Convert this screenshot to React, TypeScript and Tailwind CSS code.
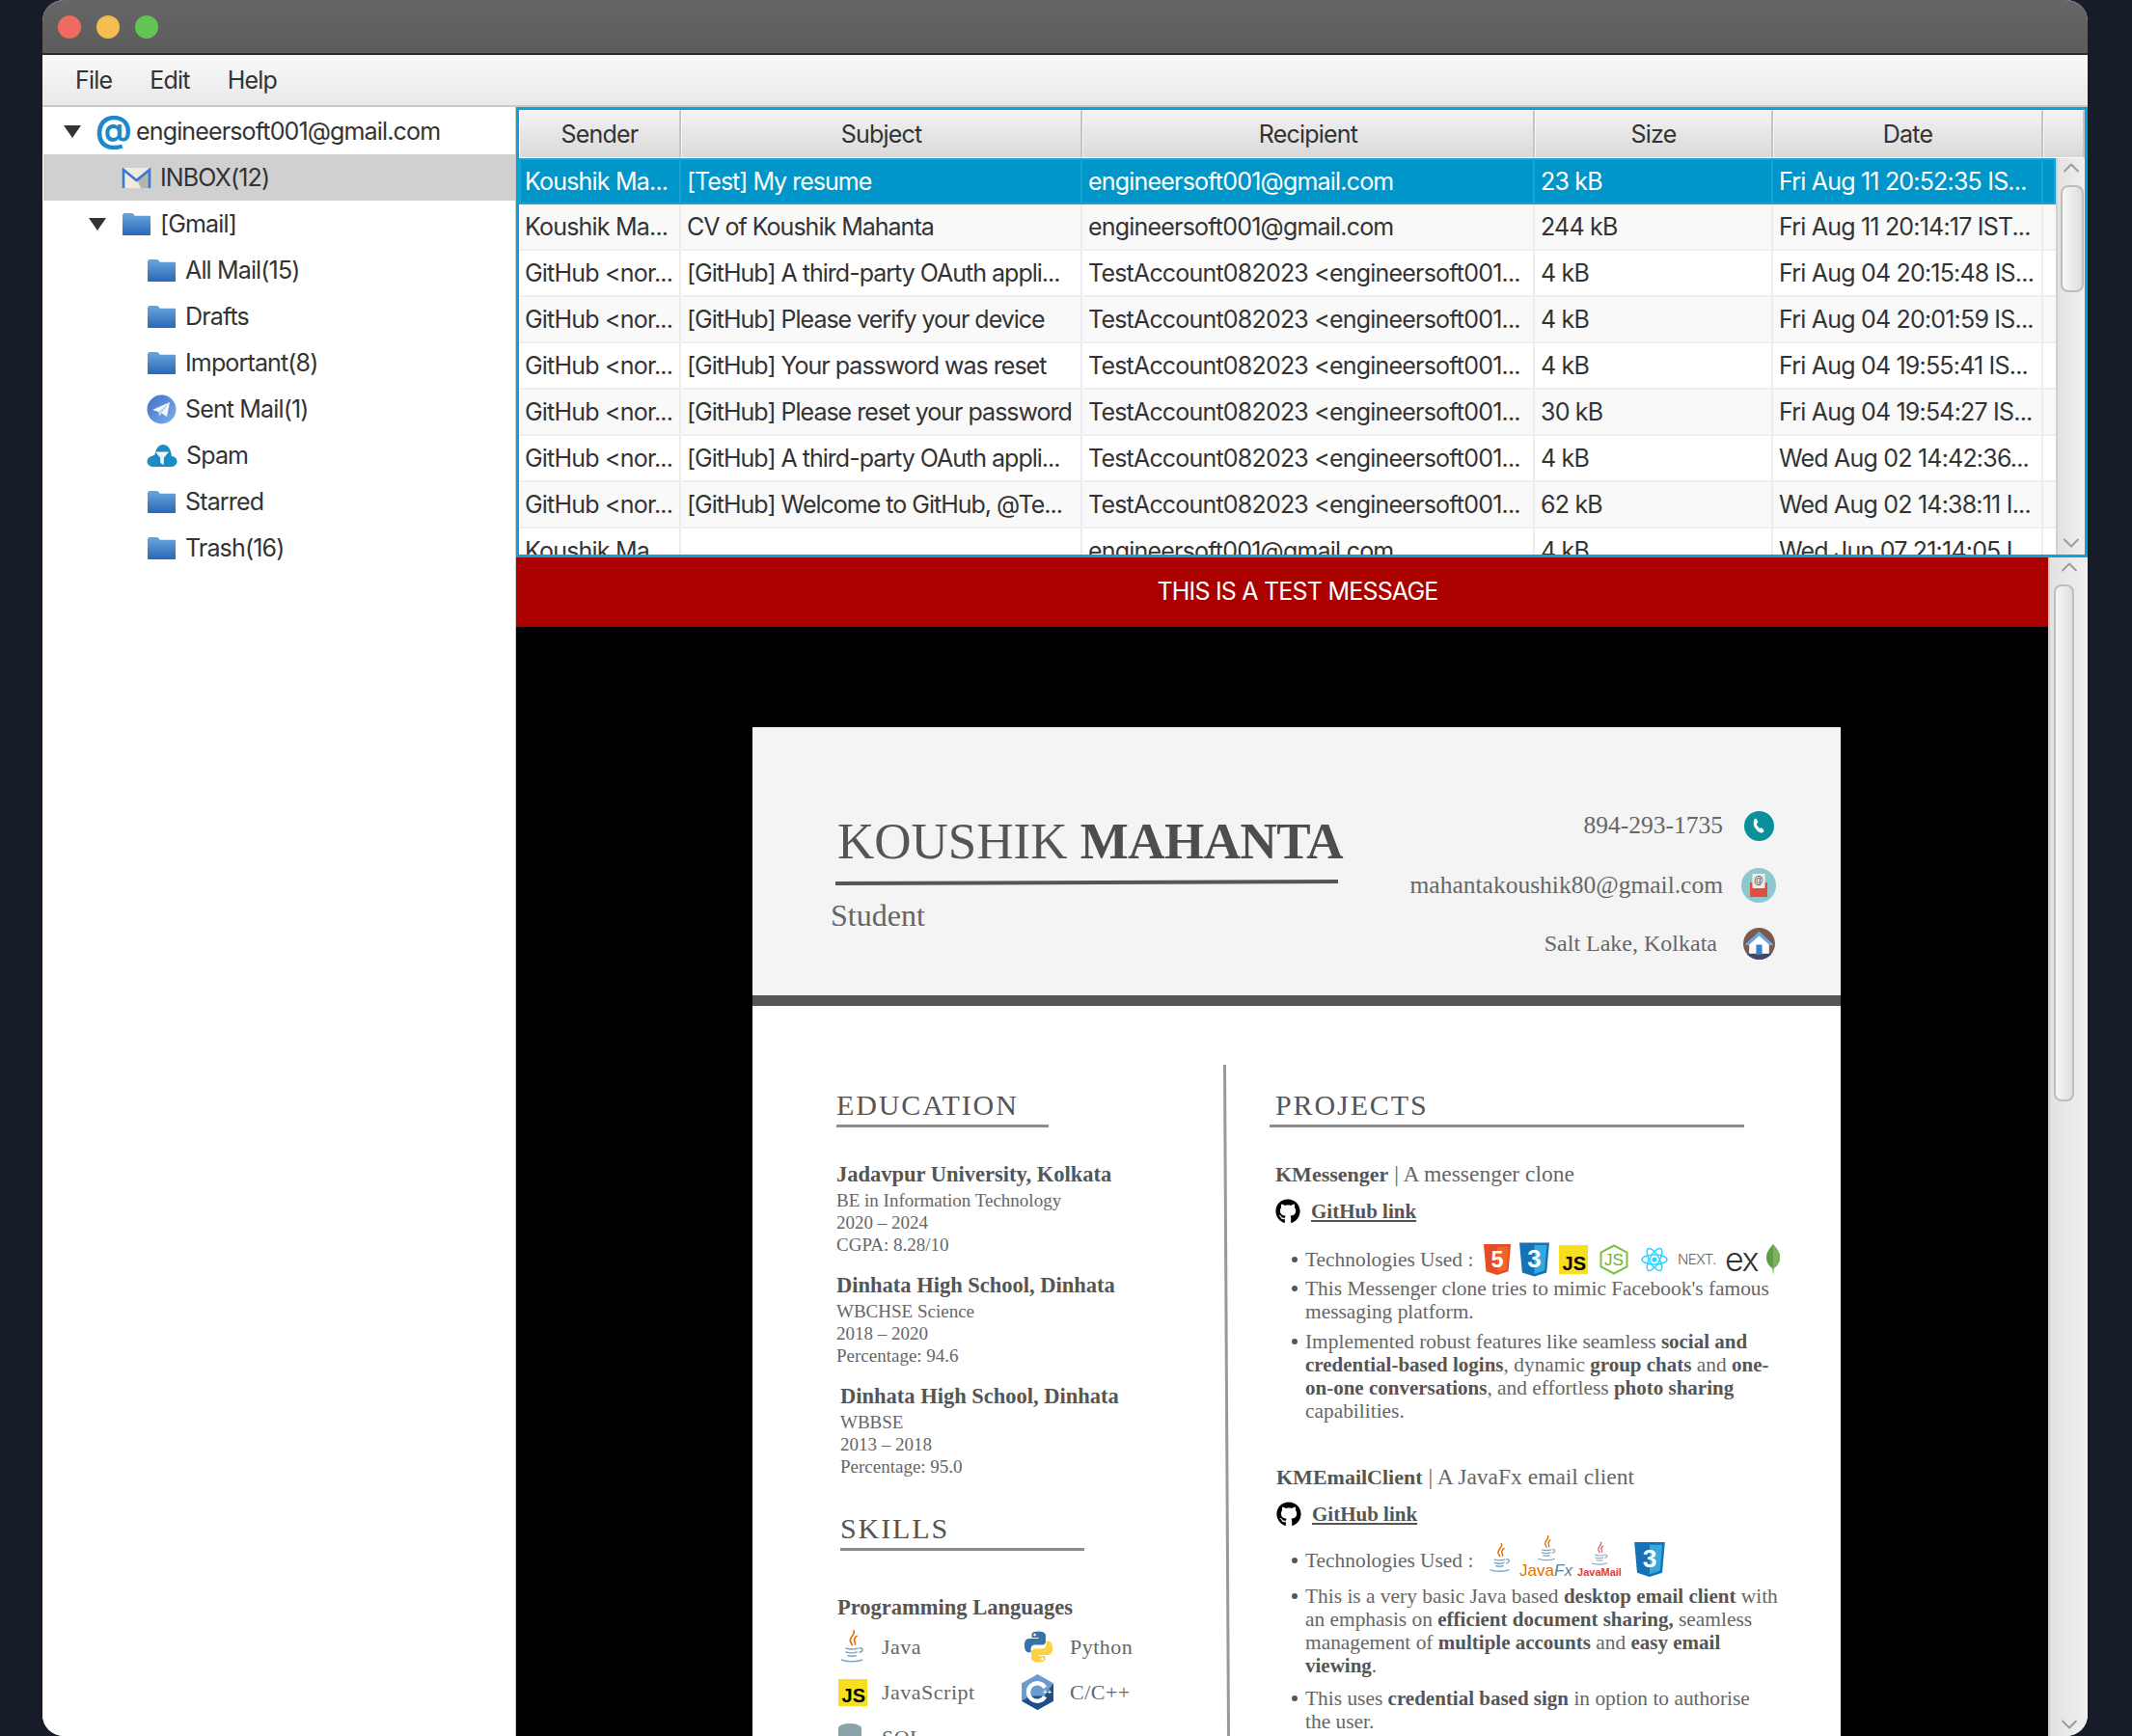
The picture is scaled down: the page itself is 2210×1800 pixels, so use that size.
import { useId } from "react";
import { ChevronUp, ChevronDown } from "lucide-react";
import { FaGithub } from "react-icons/fa";

type Mail = { sender: string; subject: string; recipient: string; size: string; date: string };

const TEST = "TestAccount082023 <engineersoft001...";
const GH = "GitHub <nor...";
const MAILS: Mail[] = [
  { sender: "Koushik Ma...", subject: "[Test] My resume", recipient: "engineersoft001@gmail.com", size: "23 kB", date: "Fri Aug 11 20:52:35 IS..." },
  { sender: "Koushik Ma...", subject: "CV of Koushik Mahanta", recipient: "engineersoft001@gmail.com", size: "244 kB", date: "Fri Aug 11 20:14:17 IST..." },
  { sender: GH, subject: "[GitHub] A third-party OAuth appli...", recipient: TEST, size: "4 kB", date: "Fri Aug 04 20:15:48 IS..." },
  { sender: GH, subject: "[GitHub] Please verify your device", recipient: TEST, size: "4 kB", date: "Fri Aug 04 20:01:59 IS..." },
  { sender: GH, subject: "[GitHub] Your password was reset", recipient: TEST, size: "4 kB", date: "Fri Aug 04 19:55:41 IS..." },
  { sender: GH, subject: "[GitHub] Please reset your password", recipient: TEST, size: "30 kB", date: "Fri Aug 04 19:54:27 IS..." },
  { sender: GH, subject: "[GitHub] A third-party OAuth appli...", recipient: TEST, size: "4 kB", date: "Wed Aug 02 14:42:36..." },
  { sender: GH, subject: "[GitHub] Welcome to GitHub, @Te...", recipient: TEST, size: "62 kB", date: "Wed Aug 02 14:38:11 I..." },
  { sender: "Koushik Ma...", subject: "", recipient: "engineersoft001@gmail.com", size: "4 kB", date: "Wed Jun 07 21:14:05 I..." },
];

// 文件夹图标
function FolderIcon() {
  const id = useId();
  return (
    <svg width="31" height="25" viewBox="0 0 31 25" className="shrink-0">
      <defs>
        <linearGradient id={id} x1="0" y1="0" x2="0" y2="1">
          <stop offset="0" stopColor="#6aa5dc" />
          <stop offset="1" stopColor="#2a67b8" />
        </linearGradient>
      </defs>
      <path d="M1 3.500C1 2 2 1 3.500 1h7c1.200 0 1.800.5 2.400 1.600l.6 1.100H29c.6 0 1 .4 1 1V23c0 .6-.4 1-1 1H2c-.6 0-1-.4-1-1z" fill={`url(#${id})`} />
    </svg>
  );
}

function GmailIcon() {
  return (
    <svg width="31" height="23" viewBox="0 0 31 23" className="shrink-0">
      <rect x="1" y="1" width="29" height="21" fill="#efebdf" />
      <path d="M30 2 30 22 20 22 15.500 13z" fill="#b5b5aa" />
      <path d="M2 22V3l13.500 11L29 3v19" fill="none" stroke="#3b77d8" strokeWidth="2.600" />
    </svg>
  );
}

function SentIcon() {
  const id = useId();
  return (
    <svg width="31" height="31" viewBox="0 0 31 31" className="shrink-0">
      <defs>
        <linearGradient id={id} x1="0" y1="0" x2="1" y2="1">
          <stop offset="0" stopColor="#3f6fc4" />
          <stop offset="1" stopColor="#7fb0ec" />
        </linearGradient>
      </defs>
      <circle cx="15.500" cy="15.500" r="15" fill={`url(#${id})`} />
      <path d="M6 16 24 8 21 23 15.500 19.500 13 22.500 12.500 18z" fill="#f4f8fd" />
      <path d="M12.500 18 24 8 15.500 19.500 13 22.500z" fill="#b9d3f2" />
    </svg>
  );
}

function SpamIcon() {
  return (
    <svg width="32" height="25" viewBox="0 0 32 25" className="shrink-0">
      <path d="M7 24C3 24 .5 21.500.5 18.500S3 13 6 13c.8-1 1.500-1.400 2.500-1.500C9.500 5 13 1 17 1s7 3 8 7.500c.8 2 1 3.500.9 4.500 3.500.3 5.600 2.600 5.600 5.500S29 24 25 24z" fill="#1a8dc6" />
      <path d="M9 8.500h14l-5.200 6.300V22l-3.600-2v-5.200z" fill="#f2f9fd" />
    </svg>
  );
}

function Arrow() {
  return <div className="w-0 h-0 border-l-[9px] border-r-[9px] border-t-[13px] border-l-transparent border-r-transparent border-t-[#333]" />;
}

function TreeRow({ indent, arrow, icon, label, selected }: { indent: number; arrow?: number; icon: React.ReactNode; label: string; selected?: boolean }) {
  return (
    <div className={`h-[48px] relative flex items-center gap-[9px] ${selected ? "bg-[#d0d0d0]" : ""}`}>
      {arrow !== undefined && (
        <div className="absolute" style={{ left: arrow }}>
          <Arrow />
        </div>
      )}
      <div className="flex items-center gap-[9px]" style={{ marginLeft: indent }}>
        {icon}
        <span className="pt-[2px]">{label}</span>
      </div>
    </div>
  );
}

function Sidebar() {
  return (
    <div className="w-[490px] shrink-0 pt-[1px] pl-[1px] bg-white text-[25px] text-[#333] tracking-[-0.85px]">
      <TreeRow
        indent={54}
        arrow={21}
        label="engineersoft001@gmail.com"
        icon={<span className="w-[33px] text-center text-[37px] leading-[40px] font-bold text-[#1b8ac8] -mt-[4px]">@</span>}
      />
      <TreeRow selected indent={81} label="INBOX(12)" icon={<GmailIcon />} />
      <TreeRow indent={81} arrow={47} label="[Gmail]" icon={<FolderIcon />} />
      <TreeRow indent={107} label="All Mail(15)" icon={<FolderIcon />} />
      <TreeRow indent={107} label="Drafts" icon={<FolderIcon />} />
      <TreeRow indent={107} label="Important(8)" icon={<FolderIcon />} />
      <TreeRow indent={107} label="Sent Mail(1)" icon={<SentIcon />} />
      <TreeRow indent={107} label="Spam" icon={<SpamIcon />} />
      <TreeRow indent={107} label="Starred" icon={<FolderIcon />} />
      <TreeRow indent={107} label="Trash(16)" icon={<FolderIcon />} />
    </div>
  );
}

function HeaderCell({ label, className }: { label: string; className: string }) {
  return (
    <div className={`h-full flex items-center justify-center pt-[2px] border border-white/70 border-r-2 border-r-[#c4c4c4] bg-gradient-to-b from-[#f3f3f3] to-[#d9d9d9] ${className}`}>
      {label}
    </div>
  );
}

function Cell({ text, className, selected }: { text: string; className: string; selected: boolean }) {
  return (
    <div className={`h-full flex items-center pl-[6px] pt-[2px] whitespace-nowrap overflow-hidden border-r-2 ${selected ? "border-r-[#1aa3d2]" : "border-r-[#ececec]"} ${className}`}>
      {text}
    </div>
  );
}

function VBar({ thumbClass, className }: { thumbClass: string; className: string }) {
  return (
    <div className={`relative shrink-0 bg-gradient-to-r from-[#e2e2e2] to-[#f0f0f0] border-l-2 border-l-[#cfcfcf] ${className}`}>
      <ChevronUp className="absolute top-[-4px] left-1/2 -translate-x-1/2 text-[#9a9a9a]" size={28} strokeWidth={1.6} />
      <div className={`absolute rounded-[8px] border-2 border-[#bdbdbd] bg-gradient-to-r from-[#f7f7f7] to-[#dedede] ${thumbClass}`} />
      <ChevronDown className="absolute bottom-[-2px] left-1/2 -translate-x-1/2 text-[#9a9a9a]" size={28} strokeWidth={1.6} />
    </div>
  );
}

function MailTable() {
  return (
    <div className="h-[467px] shrink-0 border-[3px] border-[#0aa2d8] overflow-hidden flex flex-col text-[25px] text-[#333] tracking-[-0.8px]">
      <div className="h-[50px] shrink-0 flex">
        <HeaderCell label="Sender" className="w-[168px]" />
        <HeaderCell label="Subject" className="w-[416px]" />
        <HeaderCell label="Recipient" className="w-[469px]" />
        <HeaderCell label="Size" className="w-[247px]" />
        <HeaderCell label="Date" className="w-[280px]" />
        <HeaderCell label="" className="flex-1 border-r-0" />
      </div>
      <div className="flex-1 min-h-0 flex">
        <div className="flex-1 min-w-0 overflow-hidden">
          {MAILS.map((m, i) => {
            const selected = i === 0;
            const rowClass = selected
              ? "bg-[#0096c9] text-white ring-2 ring-inset ring-[#1aa3d2]"
              : `border-b-2 border-b-[#efefef] ${i % 2 === 0 ? "bg-white" : "bg-[#f9f9f9]"}`;
            return (
              <div key={i} className={`h-[48px] flex ${rowClass}`}>
                <Cell selected={selected} text={m.sender} className="w-[168px] shrink-0" />
                <Cell selected={selected} text={m.subject} className="w-[416px] shrink-0 tracking-[-1px]" />
                <Cell selected={selected} text={m.recipient} className="w-[469px] shrink-0" />
                <Cell selected={selected} text={m.size} className="w-[247px] shrink-0" />
                <Cell selected={selected} text={m.date} className="w-[280px] shrink-0" />
                <div className="flex-1" />
              </div>
            );
          })}
        </div>
        <VBar className="w-[30px]" thumbClass="top-[28px] left-[3px] right-[1px] h-[111px]" />
      </div>
    </div>
  );
}

// 以下是简历里的图标
function JavaCup({ steam = "#e76f00", className = "" }: { steam?: string; className?: string }) {
  return (
    <svg viewBox="0 0 30 40" className={`shrink-0 ${className}`}>
      <path d="M17 1c3 5-6 8-3.500 13 .8 1.700 2 2.500 2 4M21 7c-4 2.500-3.800 5-2.500 7.500.5 1.200.5 2 0 3" fill="none" stroke={steam} strokeWidth="1.800" />
      <path d="M8 21c5 1.500 10 1.500 14 0M8 25c4 1.500 10 1.500 13 0M10 29c3 1 7 1 10 0M3 34c6 2.500 18 2.500 24 0M23 21c4-1 6 3 0 5" fill="none" stroke="#7aa7c9" strokeWidth="1.700" />
    </svg>
  );
}

function Shield({ back, front, digit, className }: { back: string; front: string; digit: string; className: string }) {
  return (
    <svg viewBox="0 0 32 36" className={`shrink-0 ${className}`}>
      <path d="M1 1h30l-2.700 30L16 35 3.700 31z" fill={back} />
      <path d="M16 3.500h12.500L26.200 29 16 32.500z" fill={front} />
      <text x="16" y="26" textAnchor="middle" fontSize="25" fontWeight="700" fill="#fff" fontFamily="Liberation Sans, sans-serif">{digit}</text>
    </svg>
  );
}

function JsBox({ className }: { className: string }) {
  return (
    <div className={`shrink-0 bg-[#f7df1e] flex items-end justify-end pr-[2px] font-['Liberation_Sans',sans-serif] font-bold text-black tracking-normal ${className}`}>JS</div>
  );
}

function NodeIcon() {
  return (
    <svg viewBox="0 0 30 32" className="w-[30px] h-[32px] shrink-0">
      <path d="M15 1.500 28.500 8.500v15L15 30.500 1.500 23.500v-15z" fill="none" stroke="#7cc142" strokeWidth="2" />
      <text x="15" y="22" textAnchor="middle" fontSize="17" fill="#6cb52f" fontFamily="Liberation Sans, sans-serif">JS</text>
    </svg>
  );
}

function ReactIcon() {
  return (
    <svg viewBox="0 0 28 26" className="w-[28px] h-[26px] shrink-0">
      <g fill="none" stroke="#2bd4ff" strokeWidth="1.500">
        <ellipse cx="14" cy="13" rx="13" ry="5" />
        <ellipse cx="14" cy="13" rx="13" ry="5" transform="rotate(60 14 13)" />
        <ellipse cx="14" cy="13" rx="13" ry="5" transform="rotate(120 14 13)" />
      </g>
      <circle cx="14" cy="13" r="2.600" fill="#2bd4ff" />
    </svg>
  );
}

function MongoIcon() {
  return (
    <svg viewBox="0 0 14 32" className="w-[14px] h-[32px] shrink-0">
      <path d="M7 0c4 5 7 8 7 14 0 6-3.500 9-6.300 11L7 32l-.7-7C3.500 23 0 20 0 14 0 8 3 5 7 0z" fill="#5e9f45" />
      <path d="M7 0c4 5 7 8 7 14 0 6-3.500 9-6.300 11L7 32z" fill="#79b45a" />
    </svg>
  );
}

function PythonIcon() {
  const snake = "M11.900 1C6.900 1 7.200 3.200 7.200 3.200v2.300H12v.7H5.300S2 5.800 2 11s2.900 5 2.900 5h1.700v-2.400s-.1-2.900 2.900-2.900h4.900s2.700 0 2.700-2.700V3.600S16.900 1 11.900 1z";
  return (
    <svg viewBox="0 0 24 24" className="w-[35px] h-[35px] shrink-0">
      <path d={snake} fill="#3872a6" />
      <path d={snake} fill="#fcd144" transform="rotate(180 12 12)" />
      <circle cx="9.300" cy="3.500" r=".9" fill="#fff" />
      <circle cx="14.700" cy="20.500" r=".9" fill="#fff" />
    </svg>
  );
}

function CppIcon() {
  return (
    <svg viewBox="0 0 32 36" className="w-[33px] h-[37px] shrink-0">
      <path d="M16 0 32 9v18l-16 9-16-9V9z" fill="#6b9bd0" />
      <path d="M32 9v18l-16 9-16-9 9-5h14z" fill="#1d4f86" />
      <path d="M23.500 13.500A9 9 0 1 0 23.500 22.500" fill="none" stroke="#fff" strokeWidth="4.200" />
      <text x="26" y="20" textAnchor="middle" fontSize="7" fontWeight="700" fill="#fff" fontFamily="Liberation Sans, sans-serif">++</text>
    </svg>
  );
}

function PhoneIcon() {
  return (
    <svg viewBox="0 0 32 32" className="w-[31px] h-[31px]">
      <circle cx="16" cy="16" r="16" fill="#0a8f9b" />
      <path d="M11 8.500c1-.8 2-.6 2.500.3l1 2.300c.3.700 0 1.300-.5 1.700l-.8.7c.5 2 1.700 3.800 3.400 5l1-.5c.7-.3 1.300-.1 1.700.4l1.500 2c.5.800.3 1.600-.5 2.200-2 1.400-4.300.4-6.300-1.700-2.300-2.400-3.800-5-4-7.600-.1-1.900.5-3.600 1-4.800z" fill="#fff" />
    </svg>
  );
}

function MailCircleIcon() {
  return (
    <svg viewBox="0 0 36 36" className="w-[36px] h-[36px]">
      <circle cx="18" cy="18" r="18" fill="#8ec8cf" />
      <rect x="9" y="15" width="18" height="15" fill="#e0503f" />
      <rect x="11.500" y="6" width="13" height="15" fill="#f6efe6" />
      <text x="18" y="16" textAnchor="middle" fontSize="10" fontWeight="700" fill="#3b5a6b" fontFamily="Liberation Sans, sans-serif">@</text>
      <path d="M9 19 18 25 27 19V30H9z" fill="#e0503f" />
    </svg>
  );
}

function HouseIcon() {
  return (
    <svg viewBox="0 0 32 32" className="w-[33px] h-[33px]">
      <defs>
        <clipPath id="house-clip">
          <circle cx="16" cy="16" r="16" />
        </clipPath>
      </defs>
      <g clipPath="url(#house-clip)">
        <rect width="32" height="32" fill="#7a5b50" />
        <rect y="26" width="32" height="6" fill="#3f4a68" />
        <path d="M16 4 30 17h-4v9H6v-9H2z" fill="#fff" />
        <path d="M16 4 30 17h-4L16 8 6 17H2z" fill="#5ca7ea" />
        <rect x="13" y="17" width="6" height="10" fill="#3b83c9" />
      </g>
    </svg>
  );
}

function SectionHeading({ title, className }: { title: string; className: string }) {
  return (
    <div className={`h-[43px] flex items-center pb-[2px] border-b-[3px] border-b-[#8c8c8c] text-[30px] tracking-[1.9px] text-[#555] ${className}`}>
      {title}
    </div>
  );
}

function School({ name, lines, className }: { name: string; lines: string[]; className: string }) {
  return (
    <div className={className}>
      <div className="h-[30px] leading-[32px] text-[22.5px] font-bold text-[#555] whitespace-nowrap">{name}</div>
      <div className="mt-[1px] text-[19px] leading-[23px] text-[#666]">
        {lines.map((l) => (
          <div key={l}>{l}</div>
        ))}
      </div>
    </div>
  );
}

function GithubLink({ className }: { className: string }) {
  return (
    <div className={`h-[30px] flex items-center gap-[11px] ${className}`}>
      <FaGithub className="text-black -mt-[3px]" size={26} />
      <span className="text-[21px] font-bold text-[#555] underline">GitHub link</span>
    </div>
  );
}

function Bullet({ children, className = "", bulletClass = "top-[9px]" }: { children: React.ReactNode; className?: string; bulletClass?: string }) {
  return (
    <div className={`relative pl-[37px] whitespace-nowrap text-[#666] ${className}`}>
      <span className={`absolute left-[23px] w-[6px] h-[6px] rounded-full bg-[#555] ${bulletClass}`} />
      {children}
    </div>
  );
}

function B({ children }: { children: React.ReactNode }) {
  return <b className="font-bold text-[#555] text-[21px]">{children}</b>;
}

function Resume() {
  return (
    <div className="w-[1128px] bg-white font-['Liberation_Serif',serif]">
      <div className="h-[278px] bg-[#f4f4f4] flex justify-between">
        <div className="pl-[88px] pt-[88px] text-[#555]">
          <div className="h-[60px] leading-[60px] text-[53px] whitespace-nowrap">
            KOUSHIK <b className="font-bold text-[#4d4d4d] tracking-[-0.5px]">MAHANTA</b>
          </div>
          <div className="mt-[11px] -ml-[2px] w-[521px] h-[4px] bg-[#555] -rotate-[0.2deg]" />
          <div className="mt-[14px] -ml-[7px] h-[36px] leading-[36px] text-[32px] text-[#666]">Student</div>
        </div>
        <div className="pt-[80px] pr-[67px] text-[25.5px] text-[#666]">
          <div className="h-[44px] flex items-center justify-end gap-[19px]">
            <span>894-293-1735</span>
            <div className="w-[36px] flex justify-center"><PhoneIcon /></div>
          </div>
          <div className="mt-[18px] h-[44px] flex items-center justify-end gap-[19px]">
            <span>mahantakoushik80@gmail.com</span>
            <div className="w-[36px] flex justify-center"><MailCircleIcon /></div>
          </div>
          <div className="mt-[16px] h-[44px] flex items-center justify-end gap-[25px] text-[24px]">
            <span>Salt Lake, Kolkata</span>
            <div className="w-[36px] flex justify-center"><HouseIcon /></div>
          </div>
        </div>
      </div>
      <div className="h-[11px] bg-[#555]" />
      <div className="flex h-[760px]">
        <div className="w-[488px] shrink-0 pl-[87px] pt-[83px]">
          <SectionHeading title="EDUCATION" className="w-[220px]" />
          <School
            className="mt-[33px]"
            name="Jadavpur University, Kolkata"
            lines={["BE in Information Technology", "2020 – 2024", "CGPA: 8.28/10"]}
          />
          <School className="mt-[15px]" name="Dinhata High School, Dinhata" lines={["WBCHSE Science", "2018 – 2020", "Percentage: 94.6"]} />
          <School className="mt-[15px] ml-[4px]" name="Dinhata High School, Dinhata" lines={["WBBSE", "2013 – 2018", "Percentage: 95.0"]} />
          <SectionHeading title="SKILLS" className="mt-[33px] ml-[4px] w-[253px]" />
          <div className="mt-[44px] ml-[1px] h-[30px] leading-[30px] text-[22.5px] font-bold text-[#555]">Programming Languages</div>
          <div className="mt-[2px] ml-[2px] grid grid-cols-[190px_1fr] auto-rows-[47px] text-[22px] text-[#666] tracking-[0.5px]">
            <div className="flex items-center">
              <JavaCup className="w-[28px] h-[38px] mr-[17px]" />
              Java
            </div>
            <div className="flex items-center">
              <div className="w-[50px]"><PythonIcon /></div>
              Python
            </div>
            <div className="flex items-center">
              <JsBox className="w-[30px] h-[28px] mr-[15px] text-[20px] leading-[22px]" />
              JavaScript
            </div>
            <div className="flex items-center">
              <div className="w-[50px]"><CppIcon /></div>
              C/C++
            </div>
            <div className="flex items-center">
              <svg viewBox="0 0 24 30" className="w-[24px] h-[30px] mr-[21px] shrink-0">
                <ellipse cx="12" cy="5" rx="12" ry="5" fill="#8aa3a8" />
                <rect y="5" width="24" height="25" fill="#8aa3a8" />
              </svg>
              SQL
            </div>
          </div>
        </div>
        <div className="mt-[61px] w-[3px] shrink-0 h-[800px] bg-[#999] origin-top -rotate-[0.33deg]" />
        <div className="flex-1 min-w-0 pl-[45px] pt-[83px] text-[21.4px]">
          <SectionHeading title="PROJECTS" className="w-[492px] pl-[6px]" />
          <div className="mt-[33px] ml-[6px] h-[30px] leading-[30px] text-[23.5px] text-[#666]">
            <b className="font-bold text-[#555] text-[22px]">KMessenger</b> | A messenger clone
          </div>
          <GithubLink className="mt-[10px] ml-[6px]" />
          <Bullet className="mt-[19px] h-[30px] leading-[30px] flex items-center" bulletClass="top-[12px]">
            <span className="w-[184px] shrink-0">Technologies Used :</span>
            <Shield back="#e44d26" front="#f16529" digit="5" className="w-[30px] h-[34px]" />
            <Shield back="#1572b6" front="#33a9dc" digit="3" className="ml-[7px] w-[33px] h-[38px]" />
            <JsBox className="ml-[9px] w-[30px] h-[30px] text-[20px] leading-[22px]" />
            <div className="ml-[12px]"><NodeIcon /></div>
            <div className="ml-[13px]"><ReactIcon /></div>
            <span className="ml-[10px] w-[42px] font-['Inter',sans-serif] font-light text-[15px] tracking-[-0.6px] text-[#666]">NEXT.</span>
            <span className="ml-[7px] font-['Inter',sans-serif] font-light text-[34px] leading-[30px] tracking-[-1.5px] text-[#333]">ex</span>
            <div className="ml-[9px]"><MongoIcon /></div>
          </Bullet>
          <Bullet className="mt-[3px] leading-[24px]">
            This Messenger clone tries to mimic Facebook's famous<br />
            messaging platform.
          </Bullet>
          <Bullet className="mt-[7px] leading-[24px]">
            Implemented robust features like seamless <B>social and</B><br />
            <B>credential-based logins</B>, dynamic <B>group chats</B> and <B>one-</B><br />
            <B>on-one conversations</B>, and effortless <B>photo sharing</B><br />
            capabilities.
          </Bullet>
          <div className="mt-[41px] ml-[7px] h-[30px] leading-[30px] text-[23.5px] text-[#666]">
            <b className="font-bold text-[#555] text-[22px]">KMEmailClient</b> | A JavaFx email client
          </div>
          <GithubLink className="mt-[10px] ml-[7px]" />
          <Bullet className="mt-[17px] h-[30px] leading-[30px] flex items-center" bulletClass="top-[12px]">
            <span className="w-[189px] shrink-0">Technologies Used :</span>
            <JavaCup className="w-[25px] h-[34px] -mt-[5px]" />
            <div className="ml-[11px] w-[49px] -mt-[8px] flex flex-col items-center leading-none">
              <JavaCup className="w-[22px] h-[30px]" />
              <span className="font-['Liberation_Sans',sans-serif] text-[17px] text-[#e76f00] -mt-[1px]">Java<i className="text-[#5382a1]">Fx</i></span>
            </div>
            <div className="ml-[10px] w-[42px] -mt-[2px] flex flex-col items-center leading-none">
              <JavaCup steam="#e8505b" className="w-[20px] h-[27px]" />
              <span className="font-['Liberation_Sans',sans-serif] font-bold text-[11px] text-[#e03a3e]">JavaMail</span>
            </div>
            <Shield back="#1572b6" front="#33a9dc" digit="3" className="ml-[14px] w-[34px] h-[38px] -mt-[2px]" />
          </Bullet>
          <Bullet className="mt-[10px] leading-[24px]">
            This is a very basic Java based <B>desktop email client</B> with<br />
            an emphasis on <B>efficient document sharing,</B> seamless<br />
            management of <B>multiple accounts</B> and <B>easy email</B><br />
            <B>viewing</B>.
          </Bullet>
          <Bullet className="mt-[10px] leading-[24px]">
            This uses <B>credential based sign</B> in option to authorise<br />
            the user.
          </Bullet>
        </div>
      </div>
    </div>
  );
}

export default function App() {
  return (
    <div className="w-[2210px] h-[1800px] bg-[#161d29] pl-[44px] pr-[46px] overflow-hidden font-['Inter',sans-serif]">
      <div className="h-full rounded-[22px] overflow-hidden flex flex-col bg-white">
        {/* 标题栏 */}
        <div className="h-[57px] shrink-0 flex items-center gap-[16px] pl-[16px] bg-gradient-to-b from-[#666666] to-[#5c5c5c] border-b-2 border-b-[#2b2b2b]">
          <div className="w-[24px] h-[24px] rounded-full bg-[#ee6a5f]" />
          <div className="w-[24px] h-[24px] rounded-full bg-[#f5bd4f]" />
          <div className="w-[24px] h-[24px] rounded-full bg-[#61c454]" />
        </div>
        {/* 菜单栏 */}
        <div className="h-[54px] shrink-0 flex items-center gap-[39px] pl-[34px] pt-[2px] text-[25px] text-[#333] tracking-[-0.8px] bg-gradient-to-b from-[#f9f9f9] to-[#e9e9e9] border-b-2 border-b-[#c9c9c9]">
          <span>File</span>
          <span>Edit</span>
          <span>Help</span>
        </div>
        <div className="flex-1 min-h-0 flex">
          <Sidebar />
          <div className="flex-1 min-w-0 flex flex-col border-l border-l-[#c8c8c8]">
            <MailTable />
            <div className="flex-1 min-h-0 flex">
              <div className="flex-1 min-w-0 bg-black overflow-hidden">
                <div className="h-[72px] pl-[32px] bg-[#ab0000] flex items-center justify-center text-[25px] text-white tracking-[-0.8px]">
                  THIS IS A TEST MESSAGE
                </div>
                <div className="pt-[104px] pl-[245px]">
                  <Resume />
                </div>
              </div>
              <VBar className="w-[41px]" thumbClass="top-[28px] left-[4px] right-[14px] h-[536px]" />
            </div>
          </div>
        </div>
      </div>
    </div>
  );
}
